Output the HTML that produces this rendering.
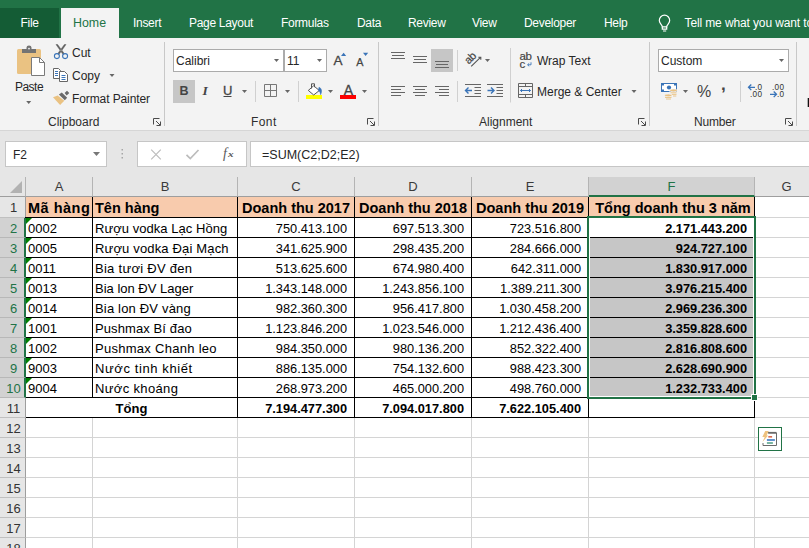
<!DOCTYPE html>
<html lang="vi">
<head>
<meta charset="utf-8">
<title>Excel</title>
<style>
*{box-sizing:border-box;margin:0;padding:0}
html,body{width:809px;height:548px;overflow:hidden;background:#e6e6e6}
body{position:relative;font-family:"Liberation Sans",sans-serif;font-size:12px;color:#262626}
.abs,#top *,#ribbon *,#fbar *{position:absolute}
#top{position:absolute;left:0;top:0;width:809px;height:38px;background:#217346}
#top .tab{top:8px;height:30px;line-height:30px;color:#fff;font-size:12px;letter-spacing:-.3px;white-space:nowrap}
#filetab{left:0;top:8px;width:59px;height:30px;background:#145c35}
#hometab{left:61px;top:8px;width:58px;height:30px;background:#f3f3f3}
#ribbon{position:absolute;left:0;top:38px;width:809px;height:93px;background:#f3f3f3;border-bottom:1px solid #d6d6d6}
#ribbon .t{white-space:nowrap;height:16px;line-height:16px;font-size:12px;color:#262626}
#ribbon .grp{color:#2e2e2e}
#ribbon .vs{width:1px;background:#d4d4d4}
#ribbon .gs{width:1px;background:#c8c8c8;top:4px;height:84px}
#ribbon .box{background:#fff;border:1px solid #ababab;height:23px;top:11px}
#ribbon .box span{left:2px;top:3px;line-height:16px;font-size:12px;white-space:nowrap;color:#262626}
#ribbon .hl{background:#c6c6c6}
.dd{width:0;height:0;border-left:3px solid transparent;border-right:3px solid transparent;border-top:3px solid #666}
#fbar{position:absolute;left:0;top:131px;width:809px;height:46px;background:#e6e6e6}
#fbar .wb{background:#fff;border:1px solid #c6c6c6;top:10px;height:26px}
.it{position:absolute;line-height:16px;color:#444;white-space:nowrap}
.it.sm{font-size:8.200px;line-height:10px;letter-spacing:.3px;color:#333}
#sheet{position:absolute;left:0;top:0;width:809px;height:548px;font-size:13px;color:#000}
#sheet>div{position:absolute}
#sheetbg{position:absolute;left:26px;top:197px;width:783px;height:351px;background:#fff}
.ch{top:177px;height:20px;background:#e6e6e6;border-right:1px solid #b4b4b4;border-bottom:1px solid #9e9e9e;text-align:center;line-height:20px;font-size:13px;color:#3a3a3a}
.ch.sel{background:#d2d2d2;color:#217346;border-bottom:2px solid #217346}
.rh{left:0;width:26px;background:#e6e6e6;border-right:1px solid #9e9e9e;border-bottom:1px solid #c0c0c0;text-align:center;font-size:13px;color:#333}
.rh span{position:absolute;left:1px;width:25px;top:1px;line-height:20px;text-align:center}
.rh.sel{background:#d2d2d2;color:#217346;border-right:2px solid #217346;border-bottom:1px solid #b8b8b8}
.gl{background:#d4d4d4}
.bl{background:#000}
.c{white-space:nowrap;line-height:22px;overflow:hidden}
.c.hd{background:#f8cbad;font-weight:bold;font-size:14.5px;line-height:23px}
.hl{padding-left:2px}
.hc{text-align:center}
.tl{padding-left:2px}
.nr{text-align:right;padding-right:7px;font-size:12.8px}
.tc{text-align:center}
.b{font-weight:bold}
.g{background:#c6c6c6}
.tri{position:absolute;left:0;top:0;width:0;height:0;border-top:6.500px solid #008000;border-right:6.500px solid transparent}
#corner{left:0;top:177px;width:26px;height:20px;background:#e6e6e6;border-right:1px solid #b4b4b4;border-bottom:1px solid #9e9e9e}
#corner i{position:absolute;left:10px;top:4px;width:0;height:0;border-bottom:12px solid #b2b2b2;border-left:12px solid transparent}
#selbox{left:587px;top:216px;width:169px;height:183px;border:2px solid #217346;box-shadow:inset 0 0 0 1px #fff}
#handle{left:751px;top:394px;width:7px;height:7px;background:#217346;border:1px solid #fff}
#qa{left:758px;top:427px;width:24px;height:24px;background:#fff;border:1px solid #217346}
</style>
</head>
<body>
<div id="top">
  <div id="filetab"></div>
  <div id="hometab"></div>
  <div class="tab" style="left:20.5px">File</div>
  <div class="tab" style="left:73px;color:#217346;letter-spacing:0;font-size:12.400px">Home</div>
  <div class="tab" style="left:133px">Insert</div>
  <div class="tab" style="left:189px">Page Layout</div>
  <div class="tab" style="left:281px">Formulas</div>
  <div class="tab" style="left:357px">Data</div>
  <div class="tab" style="left:408px">Review</div>
  <div class="tab" style="left:472px">View</div>
  <div class="tab" style="left:524px">Developer</div>
  <div class="tab" style="left:604px">Help</div>
  <div class="tab" style="left:684.5px;letter-spacing:-.12px">Tell me what you want to do</div>
</div>
<div id="ribbon">
  <!-- Clipboard -->
  <div class="t" style="left:9px;top:41px;width:40px;text-align:center;letter-spacing:-.5px">Paste</div>
  <div class="t" style="left:72px;top:7px">Cut</div>
  <div class="t" style="left:72px;top:30px">Copy</div>
  <div class="t" style="left:72px;top:53px;letter-spacing:-.1px">Format Painter</div>
  <div class="t grp" style="left:48px;top:76px">Clipboard</div>
  <div class="gs" style="left:164px"></div>
  <!-- Font -->
  <div class="box" style="left:173px;width:111px"><span>Calibri</span></div>
  <div class="box" style="left:284px;width:43px"><span>11</span></div>
  <div class="hl" style="left:173px;top:42px;width:22px;height:23px"></div>
  <div class="t" style="left:179.500px;top:45.400px;font-weight:bold;font-size:12.500px;color:#444">B</div>
  <div class="t" style="left:202.500px;top:45.200px;font-style:italic;font-weight:bold;font-family:'Liberation Serif',serif;font-size:13.500px;color:#444">I</div>
  <div class="t" style="left:223px;top:45.200px;font-size:13px;color:#444;-webkit-text-stroke:.3px #444">U</div>
  <div class="t grp" style="left:251px;top:76px;letter-spacing:.4px">Font</div>
  <div class="gs" style="left:378px"></div>
  <!-- Alignment -->
  <div class="hl" style="left:431px;top:11px;width:22px;height:23px"></div>
  <div class="t" style="left:537px;top:15px">Wrap Text</div>
  <div class="t" style="left:537px;top:46px">Merge &amp; Center</div>
  <div class="t grp" style="left:479px;top:76px">Alignment</div>
  <div class="gs" style="left:649px"></div>
  <!-- Number -->
  <div class="box" style="left:658px;width:131px"><span>Custom</span></div>
  <div class="t" style="left:697px;top:45.500px;font-size:16px;color:#444">%</div>
  <div class="t" style="left:721px;top:39px;font-size:17px;font-weight:bold;color:#444">,</div>
  <div class="t grp" style="left:694px;top:76px;letter-spacing:-.2px">Number</div>
  <div class="gs" style="left:796px"></div>
</div>
<div id="fbar">
  <div class="wb" style="left:5px;width:102px"></div>
  <div class="abs" style="left:13px;top:16px;font-size:12px;line-height:16px;color:#262626">F2</div>
  <div class="wb" style="left:137px;width:110px"></div>
  <div class="wb" style="left:250px;width:570px"></div>
  <div class="abs" style="left:262px;top:16px;font-size:12.5px;line-height:16px;color:#262626;white-space:nowrap">=SUM(C2;D2;E2)</div>
  <div class="abs" style="left:223px;top:14.500px;font-size:14px;line-height:16px;color:#5a5a5a;font-family:'Liberation Serif',serif;font-style:italic;white-space:nowrap">f</div>
  <div class="abs" style="left:227.500px;top:18.300px;font-size:9px;line-height:10px;color:#5a5a5a;font-family:'Liberation Serif',serif;font-style:italic;font-weight:bold;white-space:nowrap;transform:scaleX(1.25);transform-origin:0 0">x</div>
</div>
<div id="sheetbg"></div>
<svg id="icons" width="809" height="177" viewBox="0 0 809 177" style="position:absolute;left:0;top:0;overflow:hidden">
<defs>
  <path id="dd" d="M-2.5 -1.5h5l-2.5 3z" fill="#666"/>
  <g id="launch" fill="none" stroke="#4a4a4a" stroke-width="1"><path d="M0.500 6.500V0.500H6.500"/><path d="M3 3l4 4M7.500 3.500v4h-4"/></g>
</defs>
<!-- bulb -->
<g fill="none" stroke="#fff" stroke-width="1.2" transform="translate(0 .6)"><path d="M662.300 26.200c0-2-3-3.400-3-6.400a5.200 5.200 0 0 1 10.400 0c0 3-3 4.400-3 6.400z"/><path d="M662.300 26.200v2.300h4.400v-2.300M663 30.400h3.200"/></g>
<!-- paste -->
<rect x="17" y="49" width="24" height="25" rx="1.500" fill="#eac282"/>
<path d="M22 49h14v4h-14z M26.500 47.500a2.500 2 0 0 1 5 0v1.500h-5z" fill="#737373"/><circle cx="29" cy="48.600" r=".9" fill="#f3f3f3"/>
<path d="M31.500 57.500h8l5 5v13h-13z" fill="#fff" stroke="#7a7a7a"/>
<path d="M39.500 57.500v5h5" fill="none" stroke="#7a7a7a"/>
<use href="#dd" x="28.700" y="102.500"/>
<!-- cut -->
<path d="M56 44.500h1.600l6.600 9-1.300.8zM66 44.500h-1.600l-6.600 9 1.300.8z" fill="#5e5e5e" stroke="#5e5e5e" stroke-width=".5"/><g fill="none" stroke="#3a74b8" stroke-width="1.100"><circle cx="56.900" cy="56.100" r="2.500"/><circle cx="65.100" cy="56.100" r="2.500"/></g>
<!-- copy -->
<g fill="#fff" stroke="#666"><path d="M53.500 68.500h5l2 2v8h-7z"/><path d="M59.500 71.500h5l3 3v7h-8z"/></g>
<path d="M55 71.500h3M55 73.500h3M55 75.500h3M61.500 75.500h4M61.500 77.500h4M61.500 79.500h4" stroke="#3a74b8" fill="none"/>
<use href="#dd" x="112" y="75.500"/>
<!-- format painter -->
<path d="M53 97.300L57.700 95.400L64.300 100.800L60.100 105Z" fill="#eac282"/>
<path d="M58.900 94.400L61.800 92.600L67.200 97.800L64.800 100.200Z M64.600 93L67 90.700L69.300 92.900L66.700 95.600Z" fill="#6a6a6a"/>
<use href="#launch" x="153" y="118"/>
<!-- font box arrows -->
<use href="#dd" x="276.500" y="60.500"/><use href="#dd" x="319.500" y="60.500"/>
<!-- grow/shrink font -->
<g fill="#3a74b8"><path d="M341 56l2.600-3.200 2.600 3.200z"/><path d="M363 52.800h5.200l-2.600 3.200z"/></g>
<!-- underline for U + arrow -->
<path d="M223.500 96.500h8" stroke="#444" fill="none"/>
<use href="#dd" x="244.500" y="91.500"/>
<path d="M255.500 81v21M298.500 81v21" stroke="#d0d0d0" fill="none"/>
<!-- borders -->
<path d="M264.500 84.500h12v12h-12zM270.500 84.500v12M264.500 90.500h12" fill="none" stroke="#777"/>
<use href="#dd" x="287.500" y="91.500"/>
<!-- fill -->
<rect x="306" y="95" width="16" height="4" fill="#ffff00"/>
<path d="M313.700 85.800L319.300 90.500L313.700 95L308.300 90.400Z" fill="#fff" stroke="#555"/>
<path d="M311.500 88.500V83.800H314.500V87.200" fill="none" stroke="#555"/>
<path d="M319 87.200c2.600 1 3.400 4 1.600 7.500c-.2-2-.8-3.300-2.200-4.300z" fill="#3a74b8" stroke="#3a74b8" stroke-width=".5"/>
<use href="#dd" x="330.500" y="91.500"/>
<!-- font color -->
<rect x="340" y="95" width="16" height="4" fill="#ff0000"/>
<use href="#dd" x="364.500" y="91.500"/>
<use href="#launch" x="367" y="118"/>
<!-- alignment rows -->
<g stroke="#666" fill="none">
<path d="M391 52.500h14M392 55.500h12M391 58.500h14"/>
<path d="M413 56.500h14M414 59.500h12M413 62.500h14"/>
<path d="M435 61.500h14M436 64.500h12M435 67.500h14"/>
<path d="M391 86.500h14M391 89.500h10M391 92.500h14M391 95.500h10"/>
<path d="M413 86.500h14M415 89.500h10M413 92.500h14M415 95.500h10"/>
<path d="M435 86.500h14M439 89.500h10M435 92.500h14M439 95.500h10"/>
<path d="M465 84.500h16M465 96.500h16M474.500 87.500h6.500M474.500 90.500h6.500M474.500 93.500h6.500"/>
<path d="M487 84.500h16M487 96.500h16M496.500 87.500h6.500M496.500 90.500h6.500M496.500 93.500h6.500"/>
</g>
<g stroke="#3a74b8" stroke-width="1.400" fill="none"><path d="M472 90.500h-6.500M468.500 87.500l-3 3 3 3"/><path d="M487.500 90.500h6.500M491 87.500l3 3-3 3"/></g>
<path d="M457.500 50v21M457.500 81v21M510.500 48v54.500M740.500 81v21" stroke="#d0d0d0" fill="none"/>
<!-- orientation -->
<path d="M471.200 66.300l9.300-9M478.300 57.200h2.500v2.500" fill="none" stroke="#555" stroke-width="1.100"/>
<use href="#dd" x="487.500" y="60.500"/>
<!-- wrap arrow -->
<path d="M531 62.300v2.500h-3.300M529.200 63.300l-1.600 1.500 1.600 1.500" fill="none" stroke="#3a74b8" stroke-width=".9"/>
<!-- merge -->
<path d="M518.500 83.500h14v14h-14zM518.500 86.500h14M518.500 94.500h14M525.500 83.500v3M525.500 94.500v3" fill="none" stroke="#666"/>
<path d="M520.500 90.500h10M522 89l-1.500 1.500 1.500 1.500M529 89l1.500 1.500-1.500 1.500" fill="none" stroke="#3a74b8"/>
<use href="#dd" x="634" y="91.500"/>
<use href="#launch" x="638" y="118"/>
<!-- number -->
<use href="#dd" x="781.500" y="60.500"/>
<rect x="661" y="83" width="16" height="9" fill="#3a74b8"/><rect x="662" y="84" width="14" height="7" fill="#fff"/><path d="M662 84h2v1.500h-2zM674 84h2v1.500h-2zM662 89.500h2v1.500h-2zM674 89.500h2v1.500h-2z" fill="#3a74b8"/><circle cx="669" cy="87.500" r="2.100" fill="#3a74b8"/>
<g fill="#eac282" stroke="#f3f3f3" stroke-width=".7"><rect x="669" y="91.500" width="8.500" height="5.500" stroke="none" fill="#f3f3f3"/><ellipse cx="673.500" cy="90.400" rx="3.600" ry="1.400"/><ellipse cx="668.300" cy="95.400" rx="3.600" ry="1.400"/></g>
<path d="M670.500 92.800h6M672 94.400h4.500M673 96h3.300M665 97.500h6.500M666 99h5" stroke="#eac282" stroke-width=".9" fill="none"/>
<use href="#dd" x="685.500" y="91.500"/>
<g stroke="#3a74b8" stroke-width="1.300" fill="none"><path d="M755 87.300h-6.500M751.300 84.500l-2.800 2.800 2.800 2.800"/><path d="M770 94.300h6.500M773.700 91.500l2.800 2.800-2.800 2.800"/></g>
<use href="#launch" x="785" y="118"/>
<rect x="807.700" y="98" width="1.300" height="9" fill="#111"/>
<!-- formula bar -->
<path d="M93 152h7l-3.500 4z" fill="#777"/>
<g fill="#a6a6a6"><rect x="121.500" y="149" width="1.500" height="1.500"/><rect x="121.500" y="153" width="1.500" height="1.500"/><rect x="121.500" y="157" width="1.500" height="1.500"/></g>
<path d="M151.200 149.700l9.600 9.600M160.800 149.700l-9.600 9.600" stroke="#bcbcbc" stroke-width="1.200" fill="none"/>
<path d="M186.500 154.800l3.800 3.800 8.200-8.600" stroke="#bcbcbc" stroke-width="1.700" fill="none"/>
</svg>
<div class="it" style="left:333.500px;top:53.200px;font-size:13.500px;-webkit-text-stroke:.3px #444">A</div>
<div class="it" style="left:356.300px;top:54.200px;font-size:10.800px;-webkit-text-stroke:.25px #444">A</div>
<div class="it" style="left:343.700px;top:82.400px;font-size:14px;-webkit-text-stroke:.3px #444">A</div>
<div class="it" style="left:519.500px;top:47.500px;font-size:11.500px;letter-spacing:-.4px;-webkit-text-stroke:.2px #444">ab</div>
<div class="it" style="left:519.500px;top:55.500px;font-size:11.500px;-webkit-text-stroke:.2px #444">c</div>
<div class="it" style="left:470px;top:57.500px;font-size:11px;transform:translate(-50%,-50%) rotate(-45deg);letter-spacing:-.4px;-webkit-text-stroke:.2px #444">ab</div>
<div class="it sm" style="left:755px;top:83px">.0</div>
<div class="it sm" style="left:750px;top:90.200px">.00</div>
<div class="it sm" style="left:772px;top:83px">.00</div>
<div class="it sm" style="left:777px;top:90.200px">.0</div>
<div id="sheet">
<div id="corner"><i></i></div>
<div class="ch" style="left:26px;width:67px">A</div>
<div class="ch" style="left:93px;width:145px">B</div>
<div class="ch" style="left:238px;width:117px">C</div>
<div class="ch" style="left:355px;width:117px">D</div>
<div class="ch" style="left:472px;width:117px">E</div>
<div class="ch sel" style="left:589px;width:166px">F</div>
<div class="ch" style="left:755px;width:64px">G</div>
<div class="rh" style="top:197px;height:21px"><span>1</span></div>
<div class="rh sel" style="top:218px;height:20px"><span>2</span></div>
<div class="rh sel" style="top:238px;height:20px"><span>3</span></div>
<div class="rh sel" style="top:258px;height:20px"><span>4</span></div>
<div class="rh sel" style="top:278px;height:20px"><span>5</span></div>
<div class="rh sel" style="top:298px;height:20px"><span>6</span></div>
<div class="rh sel" style="top:318px;height:20px"><span>7</span></div>
<div class="rh sel" style="top:338px;height:20px"><span>8</span></div>
<div class="rh sel" style="top:358px;height:20px"><span>9</span></div>
<div class="rh sel" style="top:378px;height:20px"><span>10</span></div>
<div class="rh" style="top:398px;height:20px"><span>11</span></div>
<div class="rh" style="top:418px;height:20px"><span>12</span></div>
<div class="rh" style="top:438px;height:20px"><span>13</span></div>
<div class="rh" style="top:458px;height:20px"><span>14</span></div>
<div class="rh" style="top:478px;height:20px"><span>15</span></div>
<div class="rh" style="top:498px;height:20px"><span>16</span></div>
<div class="rh" style="top:518px;height:20px"><span>17</span></div>
<div class="rh" style="top:538px;height:20px"><span>18</span></div>
<div class="gl" style="left:26px;top:217px;width:783px;height:1px"></div>
<div class="gl" style="left:26px;top:237px;width:783px;height:1px"></div>
<div class="gl" style="left:26px;top:257px;width:783px;height:1px"></div>
<div class="gl" style="left:26px;top:277px;width:783px;height:1px"></div>
<div class="gl" style="left:26px;top:297px;width:783px;height:1px"></div>
<div class="gl" style="left:26px;top:317px;width:783px;height:1px"></div>
<div class="gl" style="left:26px;top:337px;width:783px;height:1px"></div>
<div class="gl" style="left:26px;top:357px;width:783px;height:1px"></div>
<div class="gl" style="left:26px;top:377px;width:783px;height:1px"></div>
<div class="gl" style="left:26px;top:397px;width:783px;height:1px"></div>
<div class="gl" style="left:26px;top:417px;width:783px;height:1px"></div>
<div class="gl" style="left:26px;top:437px;width:783px;height:1px"></div>
<div class="gl" style="left:26px;top:457px;width:783px;height:1px"></div>
<div class="gl" style="left:26px;top:477px;width:783px;height:1px"></div>
<div class="gl" style="left:26px;top:497px;width:783px;height:1px"></div>
<div class="gl" style="left:26px;top:517px;width:783px;height:1px"></div>
<div class="gl" style="left:26px;top:537px;width:783px;height:1px"></div>
<div class="gl" style="left:26px;top:557px;width:783px;height:1px"></div>
<div class="gl" style="left:92px;top:197px;width:1px;height:351px"></div>
<div class="gl" style="left:237px;top:197px;width:1px;height:351px"></div>
<div class="gl" style="left:354px;top:197px;width:1px;height:351px"></div>
<div class="gl" style="left:471px;top:197px;width:1px;height:351px"></div>
<div class="gl" style="left:588px;top:197px;width:1px;height:351px"></div>
<div class="gl" style="left:754px;top:197px;width:1px;height:351px"></div>
<div class="gl" style="left:818px;top:197px;width:1px;height:351px"></div>
<div class="c hd hl" style="left:26px;top:197px;width:66px;height:20px;letter-spacing:.5px">Mã hàng</div>
<div class="c hd hl" style="left:93px;top:197px;width:144px;height:20px">Tên hàng</div>
<div class="c hd hc" style="left:238px;top:197px;width:116px;height:20px">Doanh thu 2017</div>
<div class="c hd hc" style="left:355px;top:197px;width:116px;height:20px">Doanh thu 2018</div>
<div class="c hd hc" style="left:472px;top:197px;width:116px;height:20px">Doanh thu 2019</div>
<div class="c hd hc" style="left:589px;top:197px;width:165px;height:20px;padding-left:3px">Tổng doanh thu 3 năm</div>
<div class="c tl" style="left:26px;top:218px;width:66px;height:19px"><i class="tri"></i>0002</div>
<div class="c tl" style="left:93px;top:218px;width:144px;height:19px;letter-spacing:0.05px">Rượu vodka Lạc Hồng</div>
<div class="c nr" style="left:238px;top:218px;width:116px;height:19px">750.413.100</div>
<div class="c nr" style="left:355px;top:218px;width:116px;height:19px">697.513.300</div>
<div class="c nr" style="left:472px;top:218px;width:116px;height:19px">723.516.800</div>
<div class="c nr b" style="left:589px;top:218px;width:165px;height:19px">2.171.443.200</div>
<div class="c tl" style="left:26px;top:238px;width:66px;height:19px"><i class="tri"></i>0005</div>
<div class="c tl" style="left:93px;top:238px;width:144px;height:19px;letter-spacing:0.16px">Rượu vodka Đại Mạch</div>
<div class="c nr" style="left:238px;top:238px;width:116px;height:19px">341.625.900</div>
<div class="c nr" style="left:355px;top:238px;width:116px;height:19px">298.435.200</div>
<div class="c nr" style="left:472px;top:238px;width:116px;height:19px">284.666.000</div>
<div class="c nr b g" style="left:589px;top:238px;width:165px;height:19px">924.727.100</div>
<div class="c tl" style="left:26px;top:258px;width:66px;height:19px"><i class="tri"></i>0011</div>
<div class="c tl" style="left:93px;top:258px;width:144px;height:19px;letter-spacing:0.28px">Bia tươi ĐV đen</div>
<div class="c nr" style="left:238px;top:258px;width:116px;height:19px">513.625.600</div>
<div class="c nr" style="left:355px;top:258px;width:116px;height:19px">674.980.400</div>
<div class="c nr" style="left:472px;top:258px;width:116px;height:19px">642.311.000</div>
<div class="c nr b g" style="left:589px;top:258px;width:165px;height:19px">1.830.917.000</div>
<div class="c tl" style="left:26px;top:278px;width:66px;height:19px"><i class="tri"></i>0013</div>
<div class="c tl" style="left:93px;top:278px;width:144px;height:19px">Bia lon ĐV Lager</div>
<div class="c nr" style="left:238px;top:278px;width:116px;height:19px">1.343.148.000</div>
<div class="c nr" style="left:355px;top:278px;width:116px;height:19px">1.243.856.100</div>
<div class="c nr" style="left:472px;top:278px;width:116px;height:19px">1.389.211.300</div>
<div class="c nr b g" style="left:589px;top:278px;width:165px;height:19px">3.976.215.400</div>
<div class="c tl" style="left:26px;top:298px;width:66px;height:19px"><i class="tri"></i>0014</div>
<div class="c tl" style="left:93px;top:298px;width:144px;height:19px;letter-spacing:0.18px">Bia lon ĐV vàng</div>
<div class="c nr" style="left:238px;top:298px;width:116px;height:19px">982.360.300</div>
<div class="c nr" style="left:355px;top:298px;width:116px;height:19px">956.417.800</div>
<div class="c nr" style="left:472px;top:298px;width:116px;height:19px">1.030.458.200</div>
<div class="c nr b g" style="left:589px;top:298px;width:165px;height:19px">2.969.236.300</div>
<div class="c tl" style="left:26px;top:318px;width:66px;height:19px"><i class="tri"></i>1001</div>
<div class="c tl" style="left:93px;top:318px;width:144px;height:19px;letter-spacing:0.1px">Pushmax Bí đao</div>
<div class="c nr" style="left:238px;top:318px;width:116px;height:19px">1.123.846.200</div>
<div class="c nr" style="left:355px;top:318px;width:116px;height:19px">1.023.546.000</div>
<div class="c nr" style="left:472px;top:318px;width:116px;height:19px">1.212.436.400</div>
<div class="c nr b g" style="left:589px;top:318px;width:165px;height:19px">3.359.828.600</div>
<div class="c tl" style="left:26px;top:338px;width:66px;height:19px"><i class="tri"></i>1002</div>
<div class="c tl" style="left:93px;top:338px;width:144px;height:19px;letter-spacing:0.28px">Pushmax Chanh leo</div>
<div class="c nr" style="left:238px;top:338px;width:116px;height:19px">984.350.000</div>
<div class="c nr" style="left:355px;top:338px;width:116px;height:19px">980.136.200</div>
<div class="c nr" style="left:472px;top:338px;width:116px;height:19px">852.322.400</div>
<div class="c nr b g" style="left:589px;top:338px;width:165px;height:19px">2.816.808.600</div>
<div class="c tl" style="left:26px;top:358px;width:66px;height:19px"><i class="tri"></i>9003</div>
<div class="c tl" style="left:93px;top:358px;width:144px;height:19px;letter-spacing:0.6px">Nước tinh khiết</div>
<div class="c nr" style="left:238px;top:358px;width:116px;height:19px">886.135.000</div>
<div class="c nr" style="left:355px;top:358px;width:116px;height:19px">754.132.600</div>
<div class="c nr" style="left:472px;top:358px;width:116px;height:19px">988.423.300</div>
<div class="c nr b g" style="left:589px;top:358px;width:165px;height:19px">2.628.690.900</div>
<div class="c tl" style="left:26px;top:378px;width:66px;height:19px"><i class="tri"></i>9004</div>
<div class="c tl" style="left:93px;top:378px;width:144px;height:19px;letter-spacing:0.35px">Nước khoáng</div>
<div class="c nr" style="left:238px;top:378px;width:116px;height:19px">268.973.200</div>
<div class="c nr" style="left:355px;top:378px;width:116px;height:19px">465.000.200</div>
<div class="c nr" style="left:472px;top:378px;width:116px;height:19px">498.760.000</div>
<div class="c nr b g" style="left:589px;top:378px;width:165px;height:19px">1.232.733.400</div>
<div class="c b tc" style="left:26px;top:398px;width:211px;height:19px;background:#fff">Tổng</div>
<div class="c nr b" style="left:238px;top:398px;width:116px;height:19px">7.194.477.300</div>
<div class="c nr b" style="left:355px;top:398px;width:116px;height:19px">7.094.017.800</div>
<div class="c nr b" style="left:472px;top:398px;width:116px;height:19px">7.622.105.400</div>
<div class="c nr b" style="left:589px;top:398px;width:165px;height:19px"></div>
<div class="bl" style="left:25px;top:217px;width:730px;height:1px"></div>
<div class="bl" style="left:26px;top:237px;width:729px;height:1px"></div>
<div class="bl" style="left:26px;top:257px;width:729px;height:1px"></div>
<div class="bl" style="left:26px;top:277px;width:729px;height:1px"></div>
<div class="bl" style="left:26px;top:297px;width:729px;height:1px"></div>
<div class="bl" style="left:26px;top:317px;width:729px;height:1px"></div>
<div class="bl" style="left:26px;top:337px;width:729px;height:1px"></div>
<div class="bl" style="left:26px;top:357px;width:729px;height:1px"></div>
<div class="bl" style="left:26px;top:377px;width:729px;height:1px"></div>
<div class="bl" style="left:26px;top:397px;width:729px;height:1px"></div>
<div class="bl" style="left:26px;top:417px;width:729px;height:1px"></div>
<div class="bl" style="left:92px;top:197px;width:1px;height:201px"></div>
<div class="bl" style="left:237px;top:197px;width:1px;height:221px"></div>
<div class="bl" style="left:354px;top:197px;width:1px;height:221px"></div>
<div class="bl" style="left:471px;top:197px;width:1px;height:221px"></div>
<div class="bl" style="left:588px;top:197px;width:1px;height:221px"></div>
<div class="bl" style="left:754px;top:197px;width:1px;height:221px"></div>
<div id="selbox"></div><div id="handle"></div>
<div id="qa"><svg width="22" height="22" viewBox="759 428 22 22" style="position:absolute;left:0;top:0"><path d="M768.500 433h8v12.500h-13.500v-2.500" fill="none" stroke="#6a6a6a"/><path d="M768 432.700h8.500" stroke="#6a6a6a" stroke-width="1.600"/><path d="M765.200 431h3.600l-2.300 4.600h1.600l-5.600 6.400 2.200-5h-2.400z" fill="#eec27e"/><rect x="768.300" y="436.200" width="3.800" height="1.300" fill="#d24726"/><rect x="766.900" y="439.200" width="8" height="1.600" fill="#3b78c4"/><rect x="766.900" y="442.200" width="6" height="1.600" fill="#5aa58c"/></svg></div>
</div></body></html>
